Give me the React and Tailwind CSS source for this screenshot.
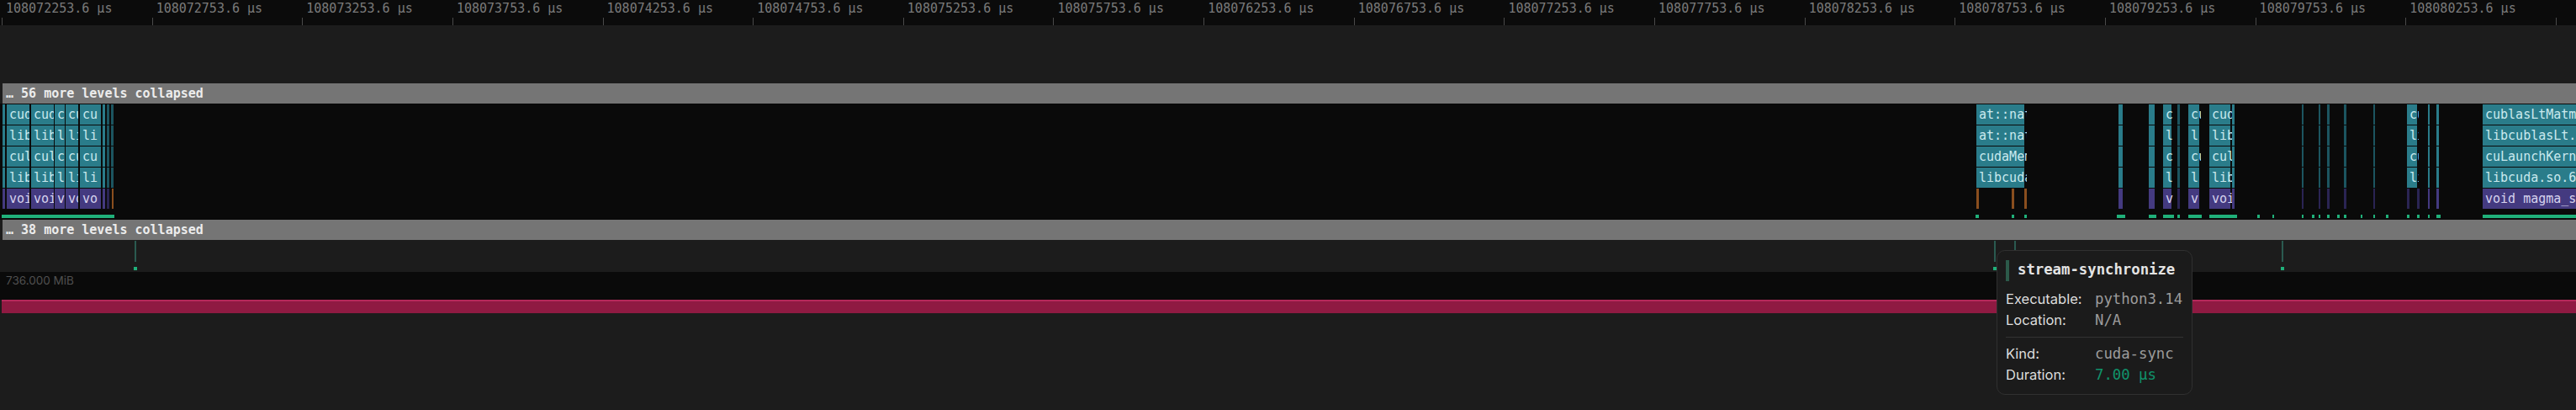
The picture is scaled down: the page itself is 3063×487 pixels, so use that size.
import React from 'react';

const MONO = 'font-["DejaVu_Sans_Mono",monospace]';

const TICKS = Array.from({ length: 18 }, (_, i) => i);
const tickLabel = (i) => `${108072253.6 + i * 500} µs`;

const C = ['cud', 'lib', 'cul', 'lib', 'voi'];
const L = ['c', 'l', 'c', 'l', 'v'];
const CU = ['cu', 'l', 'cu', 'l', 'v'];
const CLI = ['cu', 'li', 'cu', 'li', 'vo'];

// x, width, labels for the five rows, extra px of text past the block edge
const STACKS = [
  { x: 3, w: 3 },
  { x: 8, w: 27, labels: C },
  { x: 37, w: 27, labels: C },
  { x: 65, w: 12, labels: L },
  { x: 78, w: 15, labels: ['cu', 'li', 'cu', 'li', 'vo'] },
  { x: 95, w: 21, labels: CLI },
  { x: 116, w: 4 },
  { x: 122, w: 3 },
  { x: 127, w: 3, dim: true, noBase: true },
  { x: 132, w: 3, dim: true, noBase: true },
  { x: 2350, w: 57, extra: 3, noBase: true, labels: ['at::nat', 'at::nat', 'cudaMem', 'libcuda'] },
  { x: 2519, w: 5 },
  { x: 2555, w: 7 },
  { x: 2572, w: 10, extra: 2, labels: L },
  { x: 2589, w: 3, dim: true },
  { x: 2602, w: 13, extra: 2, labels: CU },
  { x: 2627, w: 25, extra: 2, labels: C },
  { x: 2654, w: 3 },
  { x: 2737, w: 2, dim: true },
  { x: 2757, w: 2, dim: true },
  { x: 2767, w: 3, dim: true },
  { x: 2787, w: 3, dim: true },
  { x: 2822, w: 2, dim: true },
  { x: 2862, w: 12, extra: 2, noBase: true, labels: ['cu', 'li', 'cu', 'li'] },
  { x: 2887, w: 2 },
  { x: 2897, w: 3 },
  { x: 2952, w: 111, labels: ['cublasLtMatm', 'libcublasLt.', 'cuLaunchKern', 'libcuda.so.6', 'void magma_s'] },
];

// bottom row slivers that don't sit under a full stack
const THIN_BASE = [
  { x: 2862, w: 3, color: 'bg-[#2a2453]' },
  { x: 2874, w: 3, color: 'bg-[#2a2453]' },
  { x: 127, w: 3, color: 'bg-[#2a2453]' },
  { x: 133, w: 2, color: 'bg-[#8a4e1e]' },
  { x: 2350, w: 3, color: 'bg-[#8a4e1e]' },
  { x: 2392, w: 3, color: 'bg-[#8a4e1e]' },
  { x: 2407, w: 3, color: 'bg-[#8a4e1e]' },
];

const ROW_TOPS = [1, 26, 51, 76, 101];

const ACTIVITY = [
  [2, 134], [2349, 4], [2392, 3], [2407, 3], [2517, 10], [2555, 9], [2572, 13], [2589, 3],
  [2602, 16], [2627, 33], [2684, 3], [2702, 2], [2737, 2], [2749, 3], [2757, 2], [2767, 3],
  [2779, 3], [2787, 3], [2807, 2], [2822, 2], [2837, 3], [2862, 3], [2874, 3], [2887, 2],
  [2897, 5], [2952, 111],
];

const Block = ({ x, w, extra = 0, top, base, dim, label }) => {
  const color = base
    ? dim ? 'bg-[#2a2453]' : 'bg-[#443a80]'
    : dim ? 'bg-[#1c5560]' : 'bg-[#2a7c8a]';
  return (
    <div className="absolute h-6 overflow-hidden" style={{ left: x, top, width: w + extra }}>
      <div className={`absolute inset-y-0 left-0 ${color}`} style={{ width: w }} />
      {label && (
        <span className={`relative block pl-[3px] text-[15px] leading-[25px] whitespace-pre ${base ? 'text-[#d6d2ee]' : 'text-[#c9e9ee]'}`}>
          {label}
        </span>
      )}
    </div>
  );
};

const CollapsedBar = ({ count }) => (
  <div className="ml-[3px] h-6 bg-[#757575] pl-[4px] text-[15px] leading-6 font-bold text-[#ececec]">
    … {count} more levels collapsed
  </div>
);

const Marker = ({ x }) => (
  <>
    <div className="absolute top-[1px] h-[25px] w-[2px] bg-[#2a5a50]" style={{ left: x }} />
    <div className="absolute top-[32px] size-1 bg-[#20b07a]" style={{ left: x - 1 }} />
  </>
);

const TooltipRow = ({ label, value, valueClass = 'text-[#9c9c9c]' }) => (
  <div className="flex h-[25px] items-center">
    <span className='w-[106px] font-["Inter",sans-serif] text-[16.5px] text-[#dedede]'>{label}</span>
    <span className={`text-[17.3px] ${valueClass}`}>{value}</span>
  </div>
);

export default function App() {
  return (
    <div className={`h-[487px] w-[3063px] overflow-hidden bg-[#1c1c1c] ${MONO}`}>
      {/* time ruler */}
      <div className="flex h-[30px] bg-[#0b0b0b] pl-[2px]">
        {TICKS.map((i) => (
          <div key={i} className="relative w-[178.65px] shrink-0">
            {i < 17 && (
              <span className="absolute top-0 left-[5px] text-[15px] leading-[21px] whitespace-nowrap text-[#7a7a7a]">
                {tickLabel(i)}
              </span>
            )}
            <div className="absolute top-[21px] left-0 h-[9px] w-px bg-[#4a4a4a]" />
          </div>
        ))}
      </div>

      <div className="ml-[2px] h-[69px] bg-[#1c1c1c]" />

      <CollapsedBar count={56} />

      {/* flame chart */}
      <div className="relative h-[138px] bg-[#0a0a0a]">
        {STACKS.map((s) =>
          ROW_TOPS.map((top, row) => {
            const base = row === 4;
            if (base && s.noBase) return null;
            return (
              <Block key={`${s.x}-${row}`} x={s.x} w={s.w} extra={s.extra} top={top} base={base} dim={s.dim} label={s.labels?.[row]} />
            );
          })
        )}
        {THIN_BASE.map((s) => (
          <div key={s.x} className={`absolute top-[101px] h-6 ${s.color}`} style={{ left: s.x, width: s.w }} />
        ))}
        {ACTIVITY.map(([x, w]) => (
          <div key={x} className="absolute top-[132px] h-1 bg-[#20b07a]" style={{ left: x, width: w }} />
        ))}
      </div>

      <CollapsedBar count={38} />

      {/* sync events lane */}
      <div className="relative h-[38px] bg-[#1c1c1c]">
        <Marker x={160} />
        <Marker x={2371} />
        <Marker x={2395} />
        <Marker x={2713} />
      </div>

      {/* memory lane */}
      <div className="flex h-[33px] flex-col bg-[#0a0a0a] pl-[7px]">
        <span className='font-["Inter",sans-serif] text-[13.5px] leading-[20px] text-[#505050]'>736.000 MiB</span>
      </div>
      <div className="ml-[2px] h-4 border-t-2 border-[#b5285a] bg-[#8f1a42]" />

      {/* tooltip */}
      <div className="absolute top-[297px] left-[2374px] h-[172px] w-[233px] rounded-[10px] border border-[#303030] bg-[#1b1b1b] px-[10px] pt-[10px]">
        <div className="flex h-[26px] items-center gap-[10px]">
          <div className="h-[25px] w-1 bg-[#2c5a4a]" />
          <span className="text-[17.3px] font-bold text-[#e4e4e4]">stream-synchronize</span>
        </div>
        <div className="mt-[9px]">
          <TooltipRow label="Executable:" value="python3.14" />
          <TooltipRow label="Location:" value="N/A" />
        </div>
        <div className="my-[7px] h-px bg-[#333333]" />
        <TooltipRow label="Kind:" value="cuda-sync" />
        <TooltipRow label="Duration:" value="7.00 µs" valueClass="text-[#10936b]" />
      </div>
    </div>
  );
}
